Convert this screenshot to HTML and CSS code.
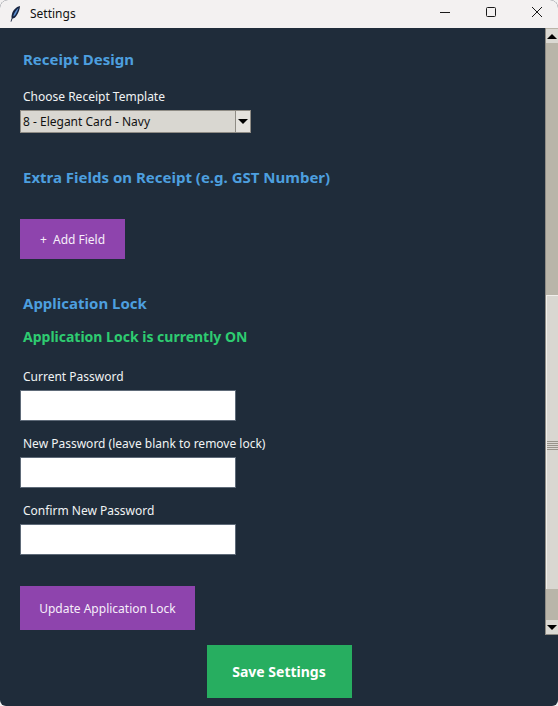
FILE: index.html
```html
<!DOCTYPE html>
<html lang="en">
<head>
<meta charset="utf-8">
<title>Settings</title>
<link rel="stylesheet" href="styles.css">
</head>
<body>
<div class="window">
  <header class="titlebar">
    <svg class="app-icon" width="16" height="18" viewBox="0 0 16 18"><path d="M13 1C9 2 6 5 5 9c-.5 2-.7 3-.3 4L3.500 16.500l.8.300L5.600 13.500c1.500 0 3-1 4.400-3.500 1.500-2.500 3-6 3-9z" fill="#16233f"/><path d="M11.500 3C9.500 4.500 8 6.500 7 9c-.4 1-.6 1.700-.7 2.500 1-.3 2-1.300 2.700-2.700C10 7 11 5 11.500 3z" fill="#5b8fd0"/></svg>
    <span class="title">Settings</span>
    <div class="controls">
      <svg width="10" height="10" viewBox="0 0 10 10"><path d="M0 5.500h10" stroke="#1a1a1a" stroke-width="1"/></svg>
      <svg width="10" height="10" viewBox="0 0 10 10"><rect x=".5" y=".5" width="9" height="9" rx="1" fill="none" stroke="#1a1a1a"/></svg>
      <svg width="10" height="10" viewBox="0 0 10 10"><path d="M0 0l10 10M10 0L0 10" stroke="#1a1a1a" stroke-width="1"/></svg>
    </div>
  </header>
  <div class="body">
    <div class="scroll-area">
      <main class="content">
        <h2 class="heading first">Receipt Design</h2>
        <div class="label label-tmpl">Choose Receipt Template</div>
        <div class="select">
          <span class="select-value">8 - Elegant Card - Navy</span>
          <span class="select-arrow"><i class="tri-down"></i></span>
        </div>
        <h2 class="heading extra">Extra Fields on Receipt (e.g. GST Number)</h2>
        <button class="btn btn-add" type="button">+&nbsp; Add Field</button>
        <h2 class="heading lock">Application Lock</h2>
        <div class="status">Application Lock is currently ON</div>
        <div class="label label-cur">Current Password</div>
        <input class="field" type="password">
        <div class="label label-next">New Password (leave blank to remove lock)</div>
        <input class="field" type="password">
        <div class="label label-next">Confirm New Password</div>
        <input class="field" type="password">
        <button class="btn btn-update" type="button">Update Application Lock</button>
      </main>
      <div class="scrollbar">
        <span class="sb-btn sb-up"><i class="tri-up"></i></span>
        <div class="sb-trough sb-top"></div>
        <div class="sb-thumb"><span class="grip"></span></div>
        <div class="sb-trough sb-bottom"></div>
        <span class="sb-btn sb-down"><i class="tri-down"></i></span>
      </div>
    </div>
    <footer class="footer">
      <button class="btn-save" type="button">Save Settings</button>
    </footer>
  </div>
</div>
</body>
</html>
```
FILE: styles.css
```css
* { box-sizing: border-box; }
html, body { margin: 0; padding: 0; background: #f3f1f1; }
body { font-family: "Noto Sans", "Open Sans", sans-serif; width: 558px; height: 706px; overflow: hidden; }
.window { width: 558px; height: 706px; display: flex; flex-direction: column; background: #1f2c3a; border-radius: 8px 8px 6px 6px; overflow: hidden; }
.titlebar { height: 28px; flex: none; background: #f3f1f1; display: flex; align-items: center; padding-left: 7px; }
.app-icon { flex: none; margin-top: -1px; }
.title { font-size: 12px; line-height: 16px; color: #111; margin-left: 7px; font-family: "Noto Sans", sans-serif; margin-top: -1px; }
.controls { margin-left: auto; display: flex; align-items: center; gap: 36px; padding-right: 16px; margin-top: -4px; }
.body { flex: 1; display: flex; flex-direction: column; min-height: 0; }
.scroll-area { height: 607px; flex: none; display: flex; }
.content { flex: 1; padding-left: 20px; display: flex; flex-direction: column; align-items: flex-start; min-width: 0; }
.heading { margin: 0; padding-left: 3px; font-size: 15px; line-height: 20px; font-weight: 700; color: #4d9fdf; white-space: nowrap; }
.first { margin-top: 21px; }
.extra { margin-top: 34px; }
.lock { margin-top: 34px; }
.label { padding-left: 3px; font-size: 12px; line-height: 16px; color: #f0f3f4; white-space: nowrap; }
.label-tmpl { margin-top: 20px; }
.label-cur { margin-top: 22px; }
.label-next { margin-top: 15px; }
.select { margin-top: 5px; width: 231px; height: 23px; background: #d9d7d1; border: 1px solid #8f8c85; display: flex; align-items: stretch; }
.select-value { flex: 1; font-size: 12px; line-height: 21px; padding-left: 2px; color: #111; white-space: nowrap; }
.select-arrow { width: 15px; flex: none; border-left: 1px solid #8f8c85; background: #e4e2dd; display: flex; align-items: center; justify-content: center; }
.tri-down, .tri-up { display: block; width: 0; height: 0; border-left: 5px solid transparent; border-right: 5px solid transparent; }
.tri-down { border-top: 5px solid #000; }
.tri-up { border-bottom: 5px solid #000; }
.btn { display: block; border: 0; padding: 0; background: #8e44ad; color: #f6eefa; font-family: inherit; font-size: 12px; }
.btn-add { margin-top: 32px; width: 105px; height: 40px; }
.status { margin-top: 14px; padding-left: 3px; font-size: 14px; line-height: 20px; font-weight: 700; color: #2ecc71; white-space: nowrap; }
.field { display: block; margin: 5px 0 0; width: 216px; height: 31px; background: #fff; border: 1px solid #5e6a78; padding: 0; }
.btn-update { margin-top: 31px; width: 175px; height: 44px; }
.scrollbar { width: 13px; flex: none; display: flex; flex-direction: column; background: #b9b5a9; border-left: 1px solid #8f8c85; border-bottom: 1px solid #8f8c85; padding-top: 1px; }
.sb-btn { height: 14px; flex: none; background: #dbd9d3; display: flex; align-items: center; justify-content: center; }
.sb-top { height: 252px; flex: none; }
.sb-thumb { height: 294px; flex: none; background: #d9d7d1; border-top: 1px solid #f0efeb; border-left: 1px solid #f0efeb; display: flex; align-items: center; }
.grip { display: block; width: 100%; height: 9px; margin-top: 5px; background: repeating-linear-gradient(#98948a 0 1px, #d9d7d1 1px 2px); }
.sb-bottom { flex: 1; }
.footer { flex: 1; display: flex; justify-content: center; padding-top: 10px; }
.btn-save { width: 145px; height: 53px; border: 0; padding: 0; background: #27ae60; color: #fff; font-family: inherit; font-size: 14px; font-weight: 700; }
```
